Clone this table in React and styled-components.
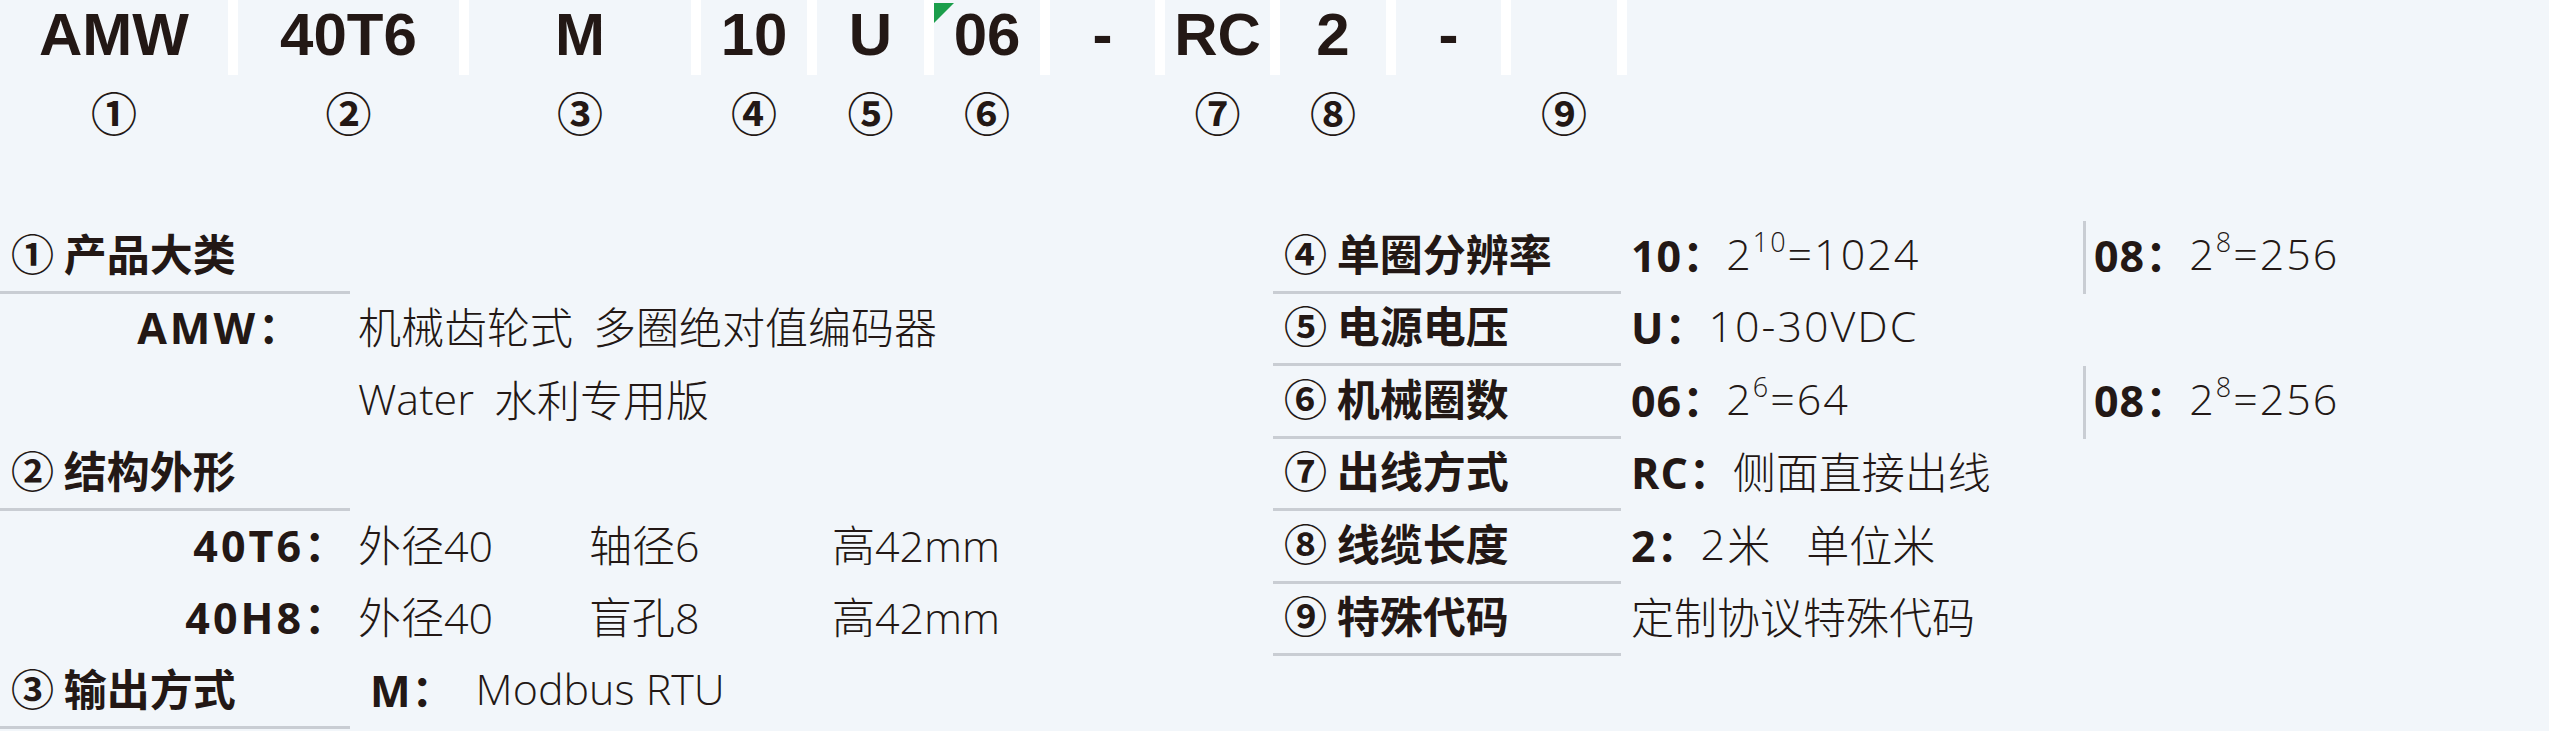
import React from "react";
import styled, { createGlobalStyle } from "styled-components";

const GlobalStyle = createGlobalStyle`
  html, body {
    margin: 0;
    padding: 0;
    background: #f2f6fa;
    overflow: hidden;
  }
  body {
    font-family: "Noto Sans CJK SC", "Noto Sans", sans-serif;
    color: #231815;
  }
`;

const codes = [
  { w: 228, code: "AMW", mark: "①" },
  { w: 221, code: "40T6", mark: "②" },
  { w: 222, code: "M", mark: "③" },
  { w: 106, code: "10", mark: "④" },
  { w: 107, code: "U", mark: "⑤" },
  { w: 106, code: "06", mark: "⑥", flag: true },
  { w: 105, code: "-", mark: "" },
  { w: 105, code: "RC", mark: "⑦" },
  { w: 106, code: "2", mark: "⑧" },
  { w: 105, code: "-", mark: "" },
  { w: 106, code: "", mark: "⑨" },
];

const App = () => {
  return (
    <>
      <GlobalStyle />
      <Page>
        <CodeBar>
          {codes.map((c, i) => (
            <CodeColumn key={i} $w={c.w}>
              <CodeCell>
                {c.flag && <Flag />}
                {c.code}
              </CodeCell>
              <Marker>{c.mark}</Marker>
            </CodeColumn>
          ))}
        </CodeBar>

        <Spec>
          <LeftTable>
            <Heading>① 产品大类</Heading>
            <Blank />
            <Label $pad={46}>AMW：</Label>
            <Value $span={3} $gap={20}>
              <span>机械齿轮式</span>
              <span>多圈绝对值编码器</span>
            </Value>
            <Blank />
            <Value $span={3} $gap={20}>
              <span>Water</span>
              <span>水利专用版</span>
            </Value>

            <Heading>② 结构外形</Heading>
            <Blank />
            <Label>40T6：</Label>
            <Value>外径40</Value>
            <Value>轴径6</Value>
            <Value>高42mm</Value>
            <Label>40H8：</Label>
            <Value>外径40</Value>
            <Value>盲孔8</Value>
            <Value>高42mm</Value>

            <Heading>③ 输出方式</Heading>
            <Value $span={3} $gap={20} $indent={12}>
              <Key>M：</Key>
              <span>Modbus RTU</span>
            </Value>
          </LeftTable>

          <RightTable>
            <Heading>④ 单圈分辨率</Heading>
            <RValue>
              <Key>10：</Key>
              <Num>2<Sup>10</Sup>=1024</Num>
            </RValue>
            <Extra>
              <Key>08：</Key>
              <Num>2<Sup>8</Sup>=256</Num>
            </Extra>

            <Heading>⑤ 电源电压</Heading>
            <RValue>
              <Key>U：</Key>
              <Num>10-30VDC</Num>
            </RValue>
            <Blank />

            <Heading>⑥ 机械圈数</Heading>
            <RValue>
              <Key>06：</Key>
              <Num>2<Sup>6</Sup>=64</Num>
            </RValue>
            <Extra>
              <Key>08：</Key>
              <Num>2<Sup>8</Sup>=256</Num>
            </Extra>

            <Heading>⑦ 出线方式</Heading>
            <RValue>
              <Key>RC：</Key>侧面直接出线
            </RValue>
            <Blank />

            <Heading>⑧ 线缆长度</Heading>
            <RValue>
              <Key>2：</Key>
              <Num>2</Num>米<Spacer />单位米
            </RValue>
            <Blank />

            <Heading>⑨ 特殊代码</Heading>
            <RValue>定制协议特殊代码</RValue>
            <Blank />
          </RightTable>
        </Spec>
      </Page>
    </>
  );
};

const Page = styled.div`
  width: 2549px;
  height: 731px;
`;

const CodeBar = styled.div`
  display: flex;
`;

const CodeColumn = styled.div`
  width: ${(p) => p.$w + 10}px;
  display: flex;
  flex-direction: column;
`;

const CodeCell = styled.div`
  position: relative;
  height: 75px;
  border-right: 10px solid #ffffff;
  display: flex;
  align-items: center;
  justify-content: center;
  padding-bottom: 5px;
  box-sizing: border-box;
  font-family: "Liberation Sans", Arial, sans-serif;
  font-size: 60px;
  font-weight: 700;
  line-height: 70px;
`;

const Flag = styled.span`
  position: absolute;
  top: 3px;
  left: 0;
  width: 0;
  height: 0;
  border-top: 20px solid #1b9e4b;
  border-right: 20px solid transparent;
`;

const Marker = styled.div`
  height: 80px;
  margin-right: 10px;
  padding-bottom: 6px;
  box-sizing: border-box;
  display: flex;
  align-items: center;
  justify-content: center;
  font-size: 46px;
  font-weight: 700;
  line-height: 1.2;
`;

const Spec = styled.div`
  display: grid;
  grid-template-columns: 1273px 1fr;
  margin-top: 66px;
`;

const LeftTable = styled.div`
  display: grid;
  grid-template-columns: 350px 231px 243px 1fr;
  grid-auto-rows: 72.5px;
`;

const RightTable = styled.div`
  display: grid;
  grid-template-columns: 348px 462px 1fr;
  grid-auto-rows: 72.5px;
`;

const Heading = styled.div`
  grid-column: 1;
  display: flex;
  align-items: center;
  padding: 0 0 8px 11px;
  border-bottom: 3px solid #c9cdd3;
  font-size: 43px;
  font-weight: 700;
  white-space: pre;
`;

const Blank = styled.div`
  grid-column: span ${(p) => p.$span || 1};
`;

const Label = styled.div`
  grid-column: 1;
  display: flex;
  align-items: center;
  justify-content: flex-end;
  padding-right: ${(p) => p.$pad || 0}px;
  padding-bottom: 8px;
  font-family: "Open Sans", "Noto Sans CJK SC", sans-serif;
  font-size: 43px;
  font-weight: 700;
  letter-spacing: 3px;
`;

const Value = styled.div`
  grid-column: span ${(p) => p.$span || 1};
  display: flex;
  align-items: center;
  gap: ${(p) => p.$gap || 0}px;
  padding-left: ${(p) => 8 + (p.$indent || 0)}px;
  padding-bottom: 8px;
  font-family: "Open Sans", "Noto Sans CJK SC", sans-serif;
  font-size: 43px;
  font-weight: 300;
  white-space: nowrap;
`;

const RValue = styled.div`
  display: flex;
  align-items: center;
  padding-left: 10px;
  padding-bottom: 8px;
  font-family: "Open Sans", "Noto Sans CJK SC", sans-serif;
  font-size: 43px;
  font-weight: 300;
  white-space: pre;
`;

const Extra = styled(RValue)`
  padding-left: 8px;
  border-left: 3px solid #c9cdd3;
`;

const Key = styled.span`
  font-weight: 700;
  letter-spacing: 1px;
`;

const Num = styled.span`
  letter-spacing: 2px;
`;

const Sup = styled.sup`
  font-size: 27px;
  line-height: 0;
  vertical-align: 0;
  position: relative;
  top: -18px;
`;

const Spacer = styled.span`
  display: inline-block;
  width: 36px;
`;

export default App;
